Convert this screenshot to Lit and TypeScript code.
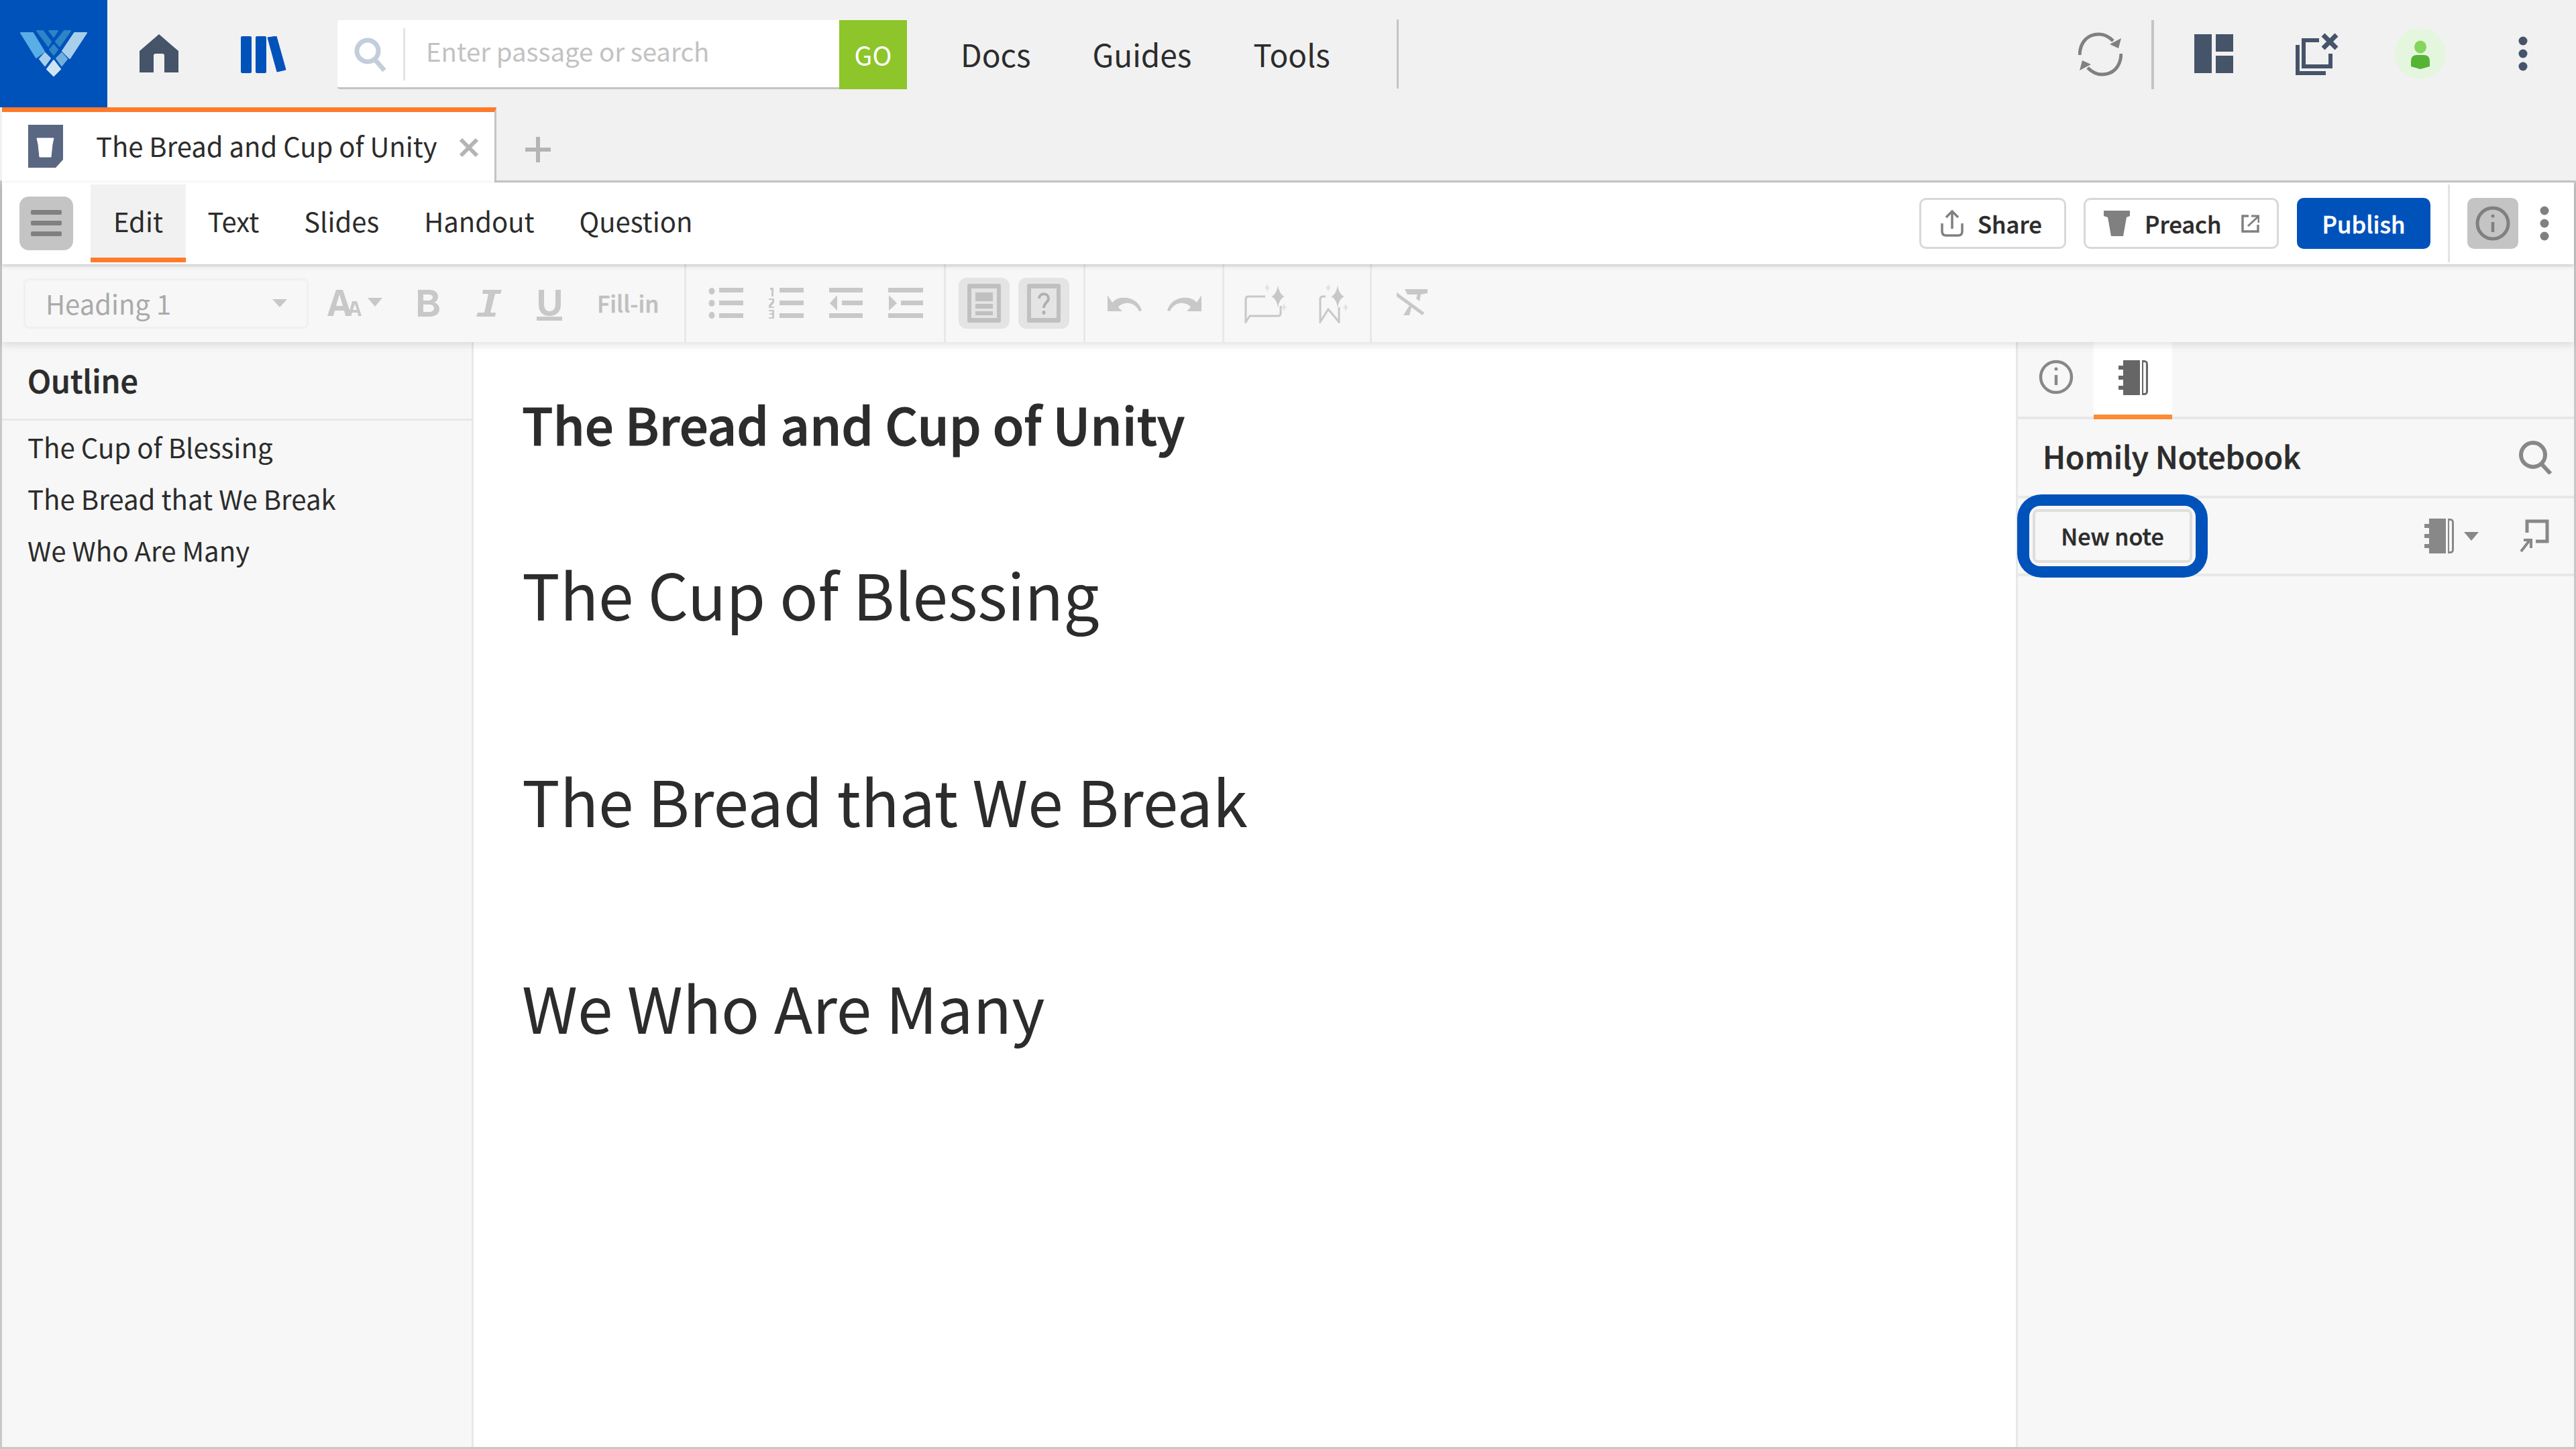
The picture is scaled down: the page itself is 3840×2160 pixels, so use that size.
import { LitElement, html, css, svg, unsafeCSS } from "lit";
import { customElement } from "lit/decorators.js";

const NAVY = "#46546a";
const BLUE = "#0052bb";

const logo = html`<svg class="logo-mark" width="100" height="70" viewBox="31 45 100 70">
  <g stroke-linejoin="round" stroke-width="2">
  <polygon points="32,49 50,49 67,77 55,86" fill="#5aaee6" stroke="#5aaee6"/>
  <polygon points="130,49 112,49 94,76 105,87" fill="#a8d0ea" stroke="#a8d0ea"/>
  <polygon points="56,46 65,46 77,62 73,69" fill="#2d85c5" stroke="#2d85c5"/>
  <polygon points="74,46 87,46 81,55" fill="#2d85c5" stroke="#2d85c5"/>
  <polygon points="97,46 106,46 90,69 84,62" fill="#2d85c5" stroke="#2d85c5"/>
  <polygon points="81,67 87,74 81,82 75,74" fill="#2d85c5" stroke="#2d85c5"/>
  <polygon points="68,79 76,87 68,98 60,88" fill="#a8d0ea" stroke="#a8d0ea"/>
  <polygon points="93,79 101,88 93,98 85,87" fill="#72b0dc" stroke="#72b0dc"/>
  <polygon points="81,90 91,103 81,113 71,103" fill="#d0e5f4" stroke="#d0e5f4"/>
  </g></svg>`;

const home = html`<svg class="home" width="58" height="57" viewBox="0 0 58 57"><path d="M29 0 58 25V57H37V32Q37 29 34 29H24Q21 29 21 32V57H0V25Z" fill="${NAVY}"/></svg>`;
const books = html`<svg class="books" width="68" height="55" viewBox="0 0 68 55" fill="${BLUE}">
  <rect width="16" height="55" rx="2"/><rect x="22" width="16" height="55" rx="2"/>
  <path d="M40 2 53 0 67 50 54 53Z" stroke="${BLUE}" stroke-width="1" stroke-linejoin="round"/></svg>`;
const searchBlue = html`<svg class="s-icon" width="50" height="52" viewBox="0 0 50 52" fill="none" stroke="#c3cddb"><circle cx="21" cy="21" r="16" stroke-width="7"/><path d="M32 34 46 50" stroke-width="7"/></svg>`;

const sync = html`<svg class="sync" width="66" height="66" viewBox="0 0 66 66">
  <g fill="#808080"><path d="M2 34C3 14 14 3 31 3 39 3 46 7 52 13" fill="none" stroke="#808080" stroke-width="5"/><path d="M64 9 60 24 47 18Z"/></g>
  <g transform="rotate(180 33 33)" fill="#808080"><path d="M2 34C3 14 14 3 31 3 39 3 46 7 52 13" fill="none" stroke="#808080" stroke-width="5"/><path d="M64 9 60 24 47 18Z"/></g></svg>`;
const layoutIc = html`<svg class="layout-ic" width="58" height="58" viewBox="0 0 58 58" fill="${NAVY}"><rect width="26" height="58"/><rect x="32" width="26" height="26"/><rect x="32" y="32" width="26" height="26"/></svg>`;
const copyX = html`<svg class="copy-x" width="64" height="63" viewBox="0 0 64 63" fill="none" stroke="${NAVY}" stroke-width="6"><path d="M3 18V60H45"/><path d="M35 11H12V50H52V31"/><path d="M41 3 61 23M61 3 41 23" stroke-width="7"/></svg>`;
const avatar = html`<svg class="avatar" width="76" height="76" viewBox="0 0 76 76"><circle cx="38" cy="38" r="38" fill="#e5f6df"/><ellipse cx="38" cy="28" rx="9" ry="9.5" fill="#85d65f"/><path d="M24 50Q24 40 32 40H44Q52 40 52 50V57L38 61 24 57Z" fill="#55b335"/></svg>`;
const dots = (c: string) => html`<svg class="dots" width="14" height="52" viewBox="0 0 14 52" fill="${c}"><circle cx="7" cy="7" r="6.5"/><circle cx="7" cy="26" r="6.5"/><circle cx="7" cy="45" r="6.5"/></svg>`;

const docIc = html`<svg class="doc" width="52" height="65" viewBox="0 0 52 65"><path d="M0 0H52V52L41 64H0Z" fill="#5a6783"/><path d="M13 20H38L36 29 34 48H17L15 29Z" fill="#fff" stroke="#fff" stroke-linejoin="round"/></svg>`;
const closeX = html`<svg class="close" width="30" height="30" viewBox="0 0 30 30"><path d="M3 3 27 27M27 3 3 27" stroke="#b4b4b4" stroke-width="6"/></svg>`;
const plus = html`<svg class="plus" width="38" height="38" viewBox="0 0 38 38"><path d="M19 0V38M0 19H38" stroke="#b4b4b4" stroke-width="6"/></svg>`;

const burger = html`<svg width="46" height="40" viewBox="0 0 46 40" fill="#808080"><rect width="46" height="7" rx="2"/><rect y="16" width="46" height="7" rx="2"/><rect y="32" width="46" height="7" rx="2"/></svg>`;
const share = html`<svg class="b-ic" width="34" height="40" viewBox="0 0 34 40" fill="none" stroke="#808080" stroke-width="3.5"><path d="M17 28V3M8 11 17 2 26 11"/><path d="M2 20V32Q2 38 8 38H26Q32 38 32 32V20"/></svg>`;
const cup = html`<svg class="b-ic" width="40" height="38" viewBox="0 0 40 38"><path d="M0 0H39V8L34 10 29 38H11L6 10 0 8Z" fill="#808080"/></svg>`;
const ext = html`<svg class="ext" width="27" height="27" viewBox="0 0 27 27" fill="none" stroke="#808080" stroke-width="3.5"><path d="M11 2H2V25H25V15"/><path d="M10 17 25 3M15 2H26V12" stroke-width="3"/></svg>`;
const infoBig = html`<svg width="52" height="52" viewBox="0 0 52 52" fill="none" stroke="#808080" stroke-width="5"><circle cx="26" cy="26" r="23"/><path d="M26 24V39" stroke-width="4.5"/><circle cx="26" cy="15" r="2.5" fill="#808080" stroke="none"/></svg>`;

const T = "#c8c8c8";
const aa = html`<svg class="t-aa" width="84" height="40" viewBox="0 0 84 40" fill="${T}"><path d="M14 0H24L37 39H28L26 31H12L10 39H1ZM14 24H24L19 7Z" fill-rule="evenodd"/><path d="M38 17H45L52 39H47L46 34H38L36 39H32ZM39 30H45L42 21Z" fill-rule="evenodd"/><path d="M61 12H83L72 25Z"/></svg>`;
const bold = html`<svg class="t-b" width="32" height="40" viewBox="0 0 32 40" fill="${T}"><path d="M0 0H16C25 0 30 4 30 10 30 15 27 18 24 19 29 20 32 24 32 29 32 36 26 40 17 40H0ZM8 7V16H15C19 16 22 14 22 11 22 8 20 7 15 7ZM8 22V33H16C21 33 24 31 24 27 24 24 21 22 16 22Z" fill-rule="evenodd"/></svg>`;
const ital = html`<svg class="t-i" width="38" height="40" viewBox="0 0 38 40" fill="${T}"><path d="M10 0H38L36 6H28L21 34H29L28 40H0L2 34H12L18 6H9Z"/></svg>`;
const under = html`<svg class="t-u" width="38" height="46" viewBox="0 0 38 46" fill="${T}"><path d="M3 0H11V21C11 28 14 32 19 32 25 32 28 28 28 21V0H36V22C36 33 29 39 19 39 9 39 3 33 3 22Z"/><rect y="40" width="38" height="6"/></svg>`;
const listB = html`<svg class="t-bul" width="52" height="46" viewBox="0 0 52 46" fill="${T}"><ellipse cx="5" cy="5" rx="4.5" ry="5"/><ellipse cx="5" cy="23" rx="4.5" ry="5"/><ellipse cx="5" cy="41" rx="4.5" ry="5"/><rect x="16" width="36" height="7"/><rect x="16" y="19" width="36" height="7"/><rect x="16" y="38" width="36" height="7"/></svg>`;
const listN = html`<svg class="t-num" width="53" height="46" viewBox="0 0 53 46" fill="${T}"><rect x="17" width="36" height="7"/><rect x="17" y="19" width="36" height="7"/><rect x="17" y="38" width="36" height="7"/><path d="M3 0H8V13H5V3H3Z"/><path d="M1 16H9V22L4 28H9V30H1V26L6 20V18H1Z"/><path d="M1 33H9V46H1V44H6V40H2V38H6V35H1Z"/></svg>`;
const outd = html`<svg class="t-out" width="50" height="46" viewBox="0 0 50 46" fill="${T}"><rect width="50" height="7"/><rect y="38" width="50" height="7"/><rect x="19" y="19" width="31" height="7"/><path d="M12 11V34L1 23Z"/></svg>`;
const ind = html`<svg class="t-ind" width="52" height="46" viewBox="0 0 52 46" fill="${T}"><rect width="52" height="7"/><rect y="38" width="52" height="7"/><rect x="19" y="19" width="33" height="7"/><path d="M1 11V34L13 23Z"/></svg>`;
const vIc = html`<svg width="52" height="58" viewBox="0 0 52 58"><rect x="1" y="0" width="50" height="58" rx="3" fill="#c0c0c0"/><rect x="7" y="7" width="38" height="44" fill="#e4e4e4"/><rect x="13" y="13" width="26" height="13" fill="#c0c0c0"/><rect x="13" y="30" width="26" height="7" fill="#c0c0c0"/><rect x="13" y="41" width="26" height="6" fill="#c0c0c0"/></svg>`;
const qIc = html`<svg width="52" height="58" viewBox="0 0 52 58"><rect x="1" y="0" width="50" height="58" rx="3" fill="#c0c0c0"/><rect x="7" y="7" width="38" height="44" fill="#e4e4e4"/><path d="M19 22C19 13 33 13 33 22 33 28 26 28 26 36" fill="none" stroke="#b0b0b0" stroke-width="4"/><ellipse cx="26" cy="43" rx="2.5" ry="3" fill="#b0b0b0"/></svg>`;
const undo = html`<svg class="t-un" width="52" height="24" viewBox="0 0 52 24" fill="${T}"><path d="M1 0 8 11C14 4 22 3 30 4 42 6 49 13 52 23L48 24C44 15 36 11 28 12 22 13 19 15 17 18L23 24H1Z"/></svg>`;
const redo = html`<svg class="t-re" width="52" height="24" viewBox="0 0 52 24" fill="${T}" ><path d="M51 0 44 11C38 4 30 3 22 4 10 6 3 13 0 23L4 24C8 15 16 11 24 12 30 13 33 15 35 18L29 24H51Z"/></svg>`;
const spark = (x: number, y: number, s: number, c: string) => svg`<path d="M${x} ${y - s * 1.4}Q${x + s * 0.15} ${y - s * 0.3} ${x + s * 0.8} ${y}Q${x + s * 0.15} ${y + s * 0.3} ${x} ${y + s * 1.4}Q${x - s * 0.15} ${y + s * 0.3} ${x - s * 0.8} ${y}Q${x - s * 0.15} ${y - s * 0.3} ${x} ${y - s * 1.4}Z" fill="${c}"/>`;
const comment = html`<svg class="t-com" width="66" height="60" viewBox="0 0 66 60" fill="none"><path d="M31 20H6Q2 20 2 24V58L8 49H50Q54 49 54 45V34" stroke="${T}" stroke-width="3"/>${spark(50, 20, 12, T)}${spark(34, 7, 5, "#e2e2e2")}${spark(59, 36, 5, "#e2e2e2")}</svg>`;
const bookmark = html`<svg class="t-bm" width="50" height="60" viewBox="0 0 50 60" fill="none"><path d="M10 20H6Q2 20 2 24V58L14 39 30 58V36" stroke="${T}" stroke-width="3"/>${spark(28, 20, 12, T)}${spark(14, 7, 5, "#e2e2e2")}${spark(40, 36, 5, "#e2e2e2")}</svg>`;
const clearF = html`<svg class="t-clr" width="46" height="42" viewBox="0 0 46 42" fill="${T}"><path d="M12 0H46V6L36 8 34 18 29 14 31 8H16Z"/><path d="M2 3 36 41" stroke="${T}" stroke-width="5" fill="none" transform="rotate(-12 19 21)"/><path d="M18 26 23 24 19 39H10Z"/></svg>`;

const tinfo = html`<svg class="p-info" width="52" height="52" viewBox="0 0 52 52" fill="none" stroke="#888" stroke-width="4.5"><circle cx="26" cy="26" r="23"/><path d="M26 23V38"/><circle cx="26" cy="14" r="2.5" fill="#888" stroke="none"/></svg>`;
const notebook = (c: string, w: number, h: number) => html`<svg width="${w}" height="${h}" viewBox="0 0 44 52" fill="${c}"><path d="M7 0H32V52H7V44H0V38H7V29H0V23H7V14H0V8H7Z"/><path d="M35 0H38Q44 0 44 6V46Q44 52 38 52H35Z"/><path d="M37 3H39Q41 3 41 6V46Q41 49 39 49H37Z" fill="#f7f7f7"/></svg>`;
const psearch = html`<svg class="p-search" width="50" height="50" viewBox="0 0 50 50" fill="none" stroke="#888" stroke-width="6"><circle cx="21" cy="21" r="18"/><path d="M33 34 47 49"/></svg>`;
const popin = html`<svg class="popin" width="44" height="50" viewBox="0 0 44 50" fill="none" stroke="#888" stroke-width="5"><path d="M11 20V3H41V33H24"/><path d="M2 48 16 30M6 31H17V43" stroke-width="4"/></svg>`;

const blue = unsafeCSS(BLUE);

@customElement("app-root")
export class AppRoot extends LitElement {
  static styles = css`
    :host { display: block; width: 3840px; height: 2160px; overflow: hidden; }
    * { box-sizing: border-box; }
    svg { display: block; flex: none; }
    .app { width: 3840px; height: 2160px; display: flex; flex-direction: column; background: #f1f1f1; color: #2c2c2c;
      font-family: "Noto Sans CJK JP", "Noto Sans", sans-serif; }

    .top { height: 160px; flex: none; display: flex; align-items: center; background: #f1f1f1; }
    .logo { width: 160px; height: 160px; background: ${blue}; display: flex; align-items: center; justify-content: center; flex: none; }
    .home { margin-left: 48px; margin-top: -1px; }
    .books { margin-left: 93px; margin-top: 3px; }
    .search { margin-left: 76px; width: 849px; height: 103px; display: flex; background: #fff; border-bottom: 3px solid #c4c4c4; border-radius: 4px 0 0 4px; flex: none; margin-top: 2px; }
    .s-icon { margin: 25px 0 0 24px; }
    .s-div { width: 3px; height: 78px; background: #e4e4e4; margin: 12px 0 0 24px; }
    .s-text { font-size: 38.4px; line-height: 91px; color: #c2c2c2; margin-left: 31px; flex: 1; white-space: nowrap; }
    .go { width: 101px; margin-bottom: -3px; background: #8dc52b; color: #fff; font-size: 39px; line-height: 103px; text-align: center; }
    .nav { margin-left: 80px; display: flex; gap: 92px; font-size: 46px; line-height: 70px; color: #2c2c2c; }
    .v-top { width: 3px; height: 103px; background: #c4c4c4; margin-left: 99px; }
    .top-right { margin-left: auto; display: flex; align-items: center; height: 160px; }
    .sync { margin-right: 43px; margin-top: 1px; }
    .v-top2 { width: 4px; height: 103px; background: #c4c4c4; margin-top: 2px; }
    .layout-ic { margin-left: 60px; }
    .copy-x { margin-left: 93px; }
    .avatar { margin-left: 84px; }
    .top-right .dots { margin-left: 108px; margin-right: 72px; }

    .tabs { height: 112px; flex: none; display: flex; padding-left: 3px; background: #f1f1f1; border-bottom: 3px solid #c8c8c8; }
    .tab { width: 737px; height: 112px; background: #fff; border-top: 7px solid #ff7a2a; border-right: 3px solid #c4c4c4; display: flex; align-items: center; padding: 0 0 3px 39px; flex: none; }
    .tab-title { font-size: 40px; line-height: 60px; margin: -3px 0 0 49px; white-space: nowrap; }
    .close { margin-left: 32px; margin-top: 4px; }
    .plus { margin: 44px 0 0 43px; }

    .shell { flex: 1; min-height: 0; display: flex; flex-direction: column; border-left: 3px solid #c8c8c8; border-right: 3px solid #c8c8c8; border-bottom: 3px solid #c8c8c8; background: #fff; }
    .menu { height: 122px; flex: none; display: flex; background: #fff; align-items: center; padding-left: 26px; box-shadow: 0 2px 6px rgba(0,0,0,.22); position: relative; z-index: 2; }
    .burger { width: 80px; height: 80px; border-radius: 14px; background: #c4c4c4; display: flex; align-items: center; justify-content: center; flex: none; }
    .mtabs { display: flex; height: 116px; margin-left: 26px; font-size: 40px; line-height: 109px; }
    .mtab { padding: 0 33.5px; height: 116px; white-space: nowrap; }
    .mtab.on { background: #f1f1f1; border-bottom: 7px solid #ff7a2a; padding: 0 34px; margin-right: -1px; }
    .mright { margin-left: auto; display: flex; align-items: center; height: 100%; }
    .btn { height: 76px; border-radius: 10px; border: 3px solid #d8d8d8; background: #fff; display: flex; align-items: center; font-size: 34.6px; font-weight: 500; -webkit-text-stroke: .5px currentColor; white-space: nowrap; line-height: 50px; }
    .b-share { width: 219px; padding-left: 29px; }
    .b-share span { margin-left: 21px; }
    .b-preach { width: 291px; padding-left: 27px; margin-left: 26px; }
    .b-preach span { margin-left: 21px; }
    .ext { margin-left: 30px; }
    .b-pub { width: 199px; margin-left: 27px; justify-content: center; background: ${blue}; border-color: ${blue}; color: #fff; }
    .v-menu { width: 3px; height: 116px; background: #e4e4e4; margin-left: 26px; }
    .info-btn { width: 76px; height: 76px; background: #c4c4c4; border-radius: 10px; margin-left: 26px; display: flex; align-items: center; justify-content: center; }
    .mright .dots { margin: 0 37px 0 32px; }

    .tools { height: 116px; flex: none; display: flex; background: #f7f7f7; box-shadow: 0 4px 12px rgba(0,0,0,.12); position: relative; z-index: 1; }
    .grp { display: flex; align-items: center; border-right: 3px solid #e8e8e8; height: 100%; flex: none; }
    .g1 { width: 1020px; padding-left: 32px; }
    .g2 { width: 387px; padding-left: 33px; }
    .g3 { width: 208px; padding-left: 19px; gap: 13px; }
    .g4 { width: 207px; padding-left: 32px; }
    .g5 { width: 220px; padding-left: 30px; }
    .g6 { padding-left: 37px; border-right: 0; }
    .sel { width: 425px; height: 75px; border: 3px solid #f0f0f0; border-radius: 8px; display: flex; align-items: center; padding: 0 29px 0 30px; justify-content: space-between; color: #aaa; font-size: 40px; line-height: 60px; }
    .caret { width: 0; height: 0; border-left: 11px solid transparent; border-right: 11px solid transparent; border-top: 12px solid #c8c8c8; }
    .t-aa { margin-left: 27px; }
    .t-b { margin-left: 52px; }
    .t-i { margin-left: 55px; }
    .t-u { margin-left: 52px; margin-top: 6px; }
    .fill { margin-left: 52px; font-size: 34px; font-weight: 500; -webkit-text-stroke: .5px currentColor; color: #c0c0c0; line-height: 50px; white-space: nowrap; }
    .t-num { margin-left: 37px; }
    .t-out { margin-left: 38px; }
    .t-ind { margin-left: 38px; }
    .vbtn { width: 76px; height: 76px; background: #e4e4e4; border-radius: 12px; display: flex; align-items: center; justify-content: center; }
    .t-re { margin-left: 38px; }
    .t-bm { margin-left: 45px; }

    .main { flex: 1; min-height: 0; display: flex; background: #fff; }
    .left { width: 703px; flex: none; background: #f7f7f7; border-right: 3px solid #e8e8e8; }
    .left h2 { margin: 0; height: 117px; padding: 23px 0 0 38px; font-size: 46.5px; font-weight: 500; -webkit-text-stroke: .7px currentColor; line-height: 66px; border-bottom: 3px solid #e8e8e8; }
    .left ul { list-style: none; margin: 0; padding: 0 0 0 38px; font-size: 40.2px; line-height: 77px; }
    .center { flex: 1; padding: 63px 0 0 72px; color: #2c2c2c; }
    .center h1 { margin: 0; font-size: 76px; font-weight: 500; -webkit-text-stroke: 1.2px currentColor; line-height: 116px; white-space: nowrap; }
    .center h3 { margin: 0 0 168px; font-size: 94.6px; font-weight: 400; line-height: 140px; white-space: nowrap; }
    .center h1 + h3 { margin-top: 125px; }
    .right { width: 832px; flex: none; background: #f7f7f7; border-left: 3px solid #e8e8e8; }
    .rtabs { height: 115px; display: flex; border-bottom: 4px solid #e8e8e8; padding-left: 31px; }
    .p-info { margin-top: 26px; }
    .rtab { width: 117px; height: 115px; background: #fff; border-bottom: 7px solid #ff8a33; margin-left: 30px; padding: 27px 0 0 37px; }
    .rhead { height: 118px; display: flex; align-items: center; border-bottom: 4px solid #e8e8e8; padding-left: 37px; font-size: 46px; font-weight: 500; -webkit-text-stroke: .7px currentColor; line-height: 66px; }
    .rhead span { margin-top: -6px; }
    .p-search { margin-left: auto; margin-right: 32px; }
    .ract { height: 116px; display: flex; align-items: center; border-bottom: 4px solid #e8e8e8; }
    .ring { margin: 0 0 0 -1px; width: 284px; height: 124px; border-radius: 36px; background: ${blue}; padding: 17px 18px; flex: none; }
    .ring-in { width: 100%; height: 100%; background: #f7f7f7; border-radius: 16px; padding: 5px; }
    .nn { width: 100%; height: 100%; border: 4px solid #dedede; border-radius: 8px; display: flex; align-items: center; justify-content: center; font-size: 34px; font-weight: 500; -webkit-text-stroke: .5px currentColor; line-height: 46px; }
    .nb { margin-left: auto; display: flex; align-items: center; }
    .nb .caret { margin-left: 15px; border-top-color: #888; border-top-width: 13px; }
    .popin { margin: 0 37px 0 61px; }
  `;

  render() {
    return html`<div class="app">
      <div class="top">
        <div class="logo">${logo}</div>
        ${home}${books}
        <div class="search">${searchBlue}<div class="s-div"></div><div class="s-text">Enter passage or search</div><div class="go">GO</div></div>
        <div class="nav"><span>Docs</span><span>Guides</span><span>Tools</span></div>
        <div class="v-top"></div>
        <div class="top-right">${sync}<div class="v-top2"></div>${layoutIc}${copyX}${avatar}${dots(NAVY)}</div>
      </div>
      <div class="tabs">
        <div class="tab">${docIc}<span class="tab-title">The Bread and Cup of Unity</span>${closeX}</div>
        ${plus}
      </div>
      <div class="shell">
        <div class="menu">
          <div class="burger">${burger}</div>
          <div class="mtabs">
            <span class="mtab on">Edit</span><span class="mtab">Text</span><span class="mtab">Slides</span><span class="mtab">Handout</span><span class="mtab">Question</span>
          </div>
          <div class="mright">
            <div class="btn b-share">${share}<span>Share</span></div>
            <div class="btn b-preach">${cup}<span>Preach</span>${ext}</div>
            <div class="btn b-pub">Publish</div>
            <div class="v-menu"></div>
            <div class="info-btn">${infoBig}</div>
            ${dots("#808080")}
          </div>
        </div>
        <div class="tools">
          <div class="grp g1"><div class="sel"><span>Heading 1</span><i class="caret"></i></div>${aa}${bold}${ital}${under}<span class="fill">Fill-in</span></div>
          <div class="grp g2">${listB}${listN}${outd}${ind}</div>
          <div class="grp g3"><div class="vbtn">${vIc}</div><div class="vbtn">${qIc}</div></div>
          <div class="grp g4">${undo}${redo}</div>
          <div class="grp g5">${comment}${bookmark}</div>
          <div class="grp g6">${clearF}</div>
        </div>
        <div class="main">
          <aside class="left"><h2>Outline</h2><ul><li>The Cup of Blessing</li><li>The Bread that We Break</li><li>We Who Are Many</li></ul></aside>
          <section class="center">
            <h1>The Bread and Cup of Unity</h1>
            <h3>The Cup of Blessing</h3><h3>The Bread that We Break</h3><h3>We Who Are Many</h3>
          </section>
          <aside class="right">
            <div class="rtabs">${tinfo}<div class="rtab">${notebook("#666", 44, 52)}</div></div>
            <div class="rhead"><span>Homily Notebook</span>${psearch}</div>
            <div class="ract">
              <div class="ring"><div class="ring-in"><div class="nn">New note</div></div></div>
              <div class="nb">${notebook("#888", 44, 52)}<i class="caret"></i>${popin}</div>
            </div>
          </aside>
        </div>
      </div>
    </div>`;
  }
}
